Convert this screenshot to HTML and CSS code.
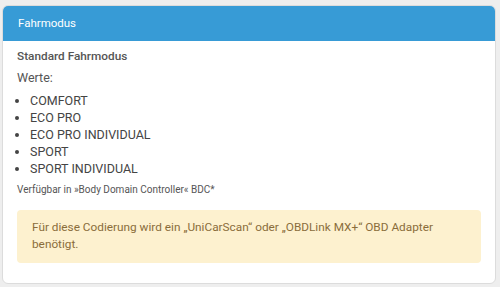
FILE: index.html
```html
<!DOCTYPE html>
<html lang="de">
<head>
    <meta charset="UTF-8">
    <title>Fahrmodus</title>
    <link rel="stylesheet" href="styles.css">
</head>
<body>
    <div class="panel">
        <div class="panel-heading">Fahrmodus</div>
        <div class="panel-body">
            <h4>Standard Fahrmodus</h4>
            <p class="label">Werte:</p>
            <ul class="values">
                <li>COMFORT</li>
                <li>ECO PRO</li>
                <li>ECO PRO INDIVIDUAL</li>
                <li>SPORT</li>
                <li>SPORT INDIVIDUAL</li>
            </ul>
            <p class="hint">Verfügbar in »Body Domain Controller« BDC*</p>
            <div class="alert">Für diese Codierung wird ein „UniCarScan“ oder „OBDLink MX+“ OBD Adapter benötigt.</div>
        </div>
    </div>
</body>
</html>
```

FILE: styles.css
```css
body {
    font-family: Roboto, 'Liberation Sans', sans-serif;
    background-color: #eeeeee;
    color: #555;
    margin: 0;
    padding: 5px 4px 3px 2px;
    font-size: 12.5px;
}
.panel {
    background: white;
    border: 1px solid #dcdcdc;
    border-radius: 6px;
    overflow: hidden;
}
.panel-heading {
    background-color: #379bd6;
    color: white;
    padding: 10px 15px;
    font-size: 11.5px;
    line-height: 15px;
}
.panel-body {
    padding: 7px 14px 20px;
}
h4 {
    margin: 0 0 4px;
    font-size: 11.8px;
    font-weight: 500;
    line-height: 17px;
}
.label {
    margin: 0 0 6px;
    line-height: 17px;
}
.values {
    margin: 0 0 6px;
    padding-left: 13px;
    line-height: 17px;
    color: #444;
}
.hint {
    margin: 0 0 13px;
    font-size: 10px;
    line-height: 14px;
}
.alert {
    background-color: #fdf1cf;
    color: #8a6d3b;
    border-radius: 4px;
    padding: 9px 15px 10px;
    font-size: 11.8px;
    line-height: 17px;
}
```
